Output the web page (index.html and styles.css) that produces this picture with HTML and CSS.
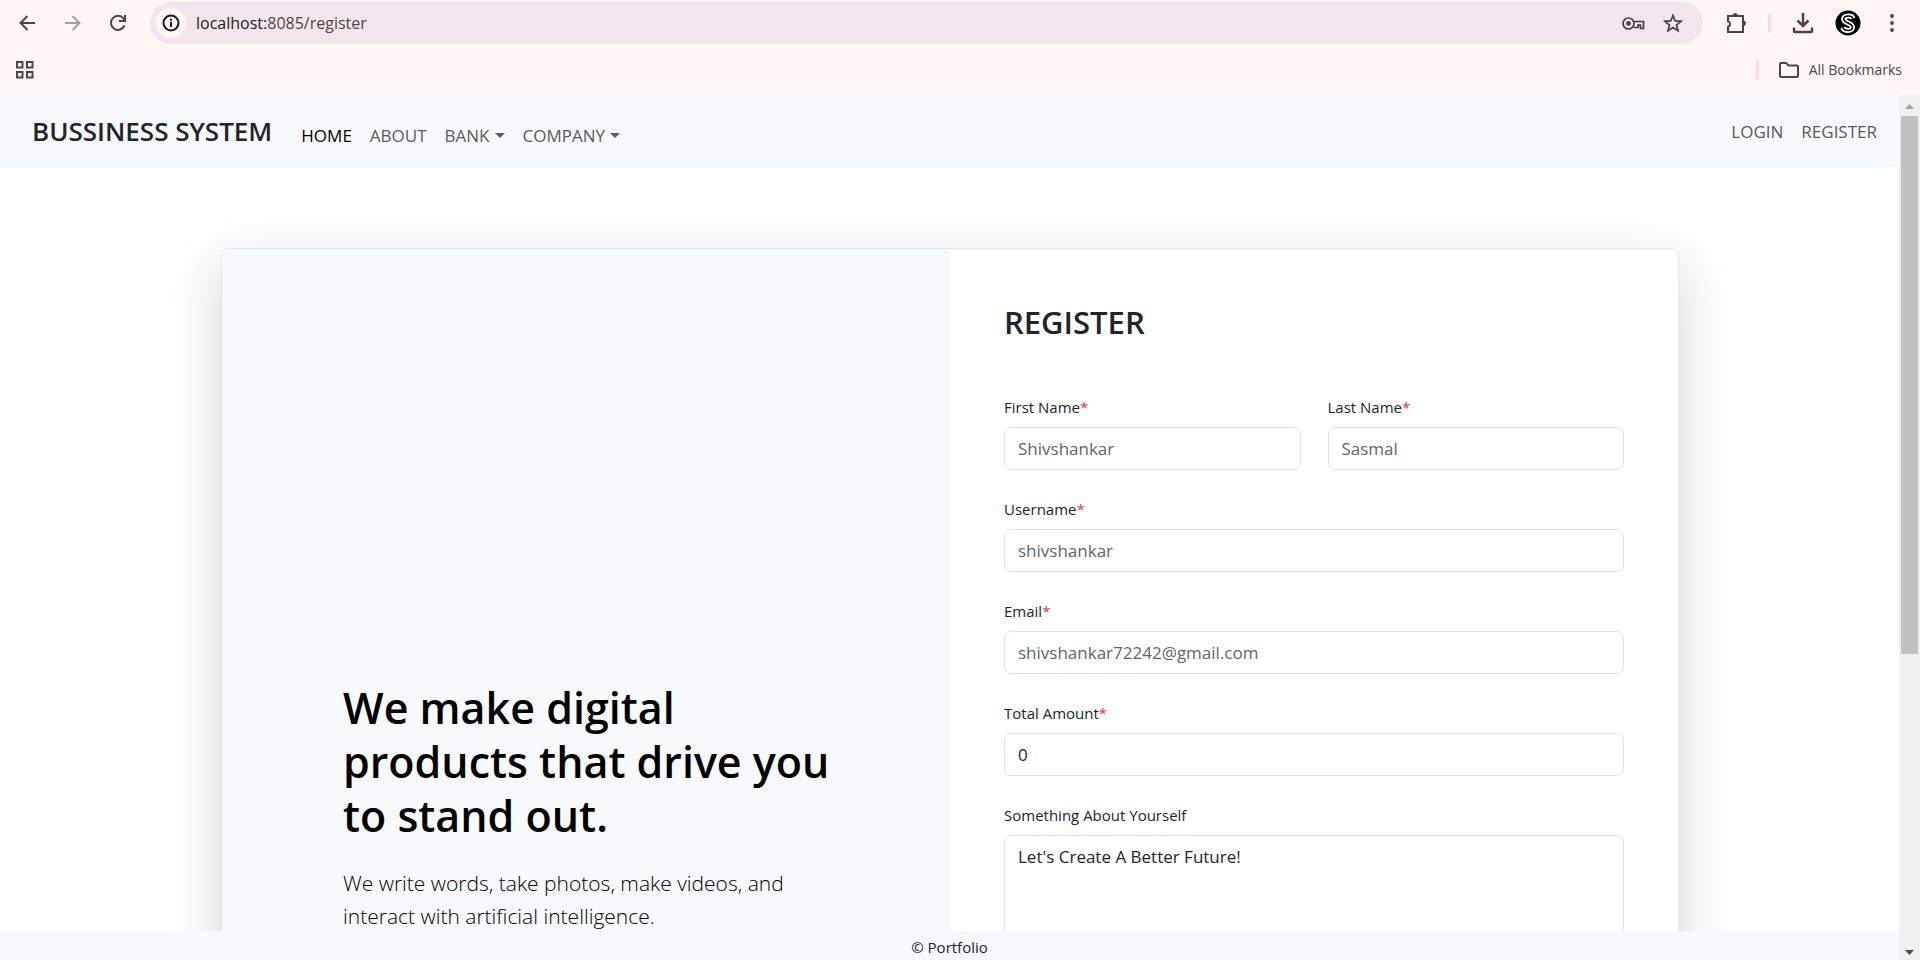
FILE: index.html
```html
<!DOCTYPE html>
<html lang="en">
<head>
<meta charset="utf-8">
<title>Register</title>
<link rel="stylesheet" href="styles.css">
</head>
<body>
<div class="browser">
  <div class="toolbar">
    <div class="nav-buttons">
      <button class="icon-btn" aria-label="Back"><svg width="20" height="20" viewBox="0 0 20 20"><path d="M17 10H3M9.500 3L2.500 10l7 7" /></svg></button>
      <button class="icon-btn faded" aria-label="Forward"><svg width="20" height="20" viewBox="0 0 20 20"><path d="M2 10h14M9.500 3l7 7-7 7"/></svg></button>
      <button class="icon-btn" aria-label="Reload"><svg width="20" height="20" viewBox="0 0 20 20"><path d="M16.500 12.500A7 7 0 1 1 15.500 5.500L17 7.500"/><path d="M17 2v6h-6"/></svg></button>
    </div>
    <div class="omnibox">
      <button class="site-info" aria-label="View site information"><svg width="18" height="18" viewBox="0 0 18 18"><circle cx="9" cy="9" r="7.500"/><path d="M9 8v5M9 4.800v2"/></svg></button>
      <span class="url">localhost:<span class="url-path">8085/register</span></span>
      <button class="icon-btn" aria-label="Passwords"><svg width="24" height="20" viewBox="0 0 24 20"><circle class="thin" cx="7.500" cy="10.500" r="5.500"/><circle cx="7.500" cy="10.500" r="1.400" fill="currentColor"/><path class="thin" d="M12.500 8.500h10v7h-3v-3.300h-2.500v2.300h-4.500"/></svg></button>
      <button class="icon-btn" aria-label="Bookmark this tab"><svg width="20" height="20" viewBox="0 0 20 20"><path class="thin" d="M10 2.500l2.200 5.400 5.800.4-4.500 3.700 1.500 5.700-5-3.100-5 3.100 1.500-5.700L2 8.300l5.800-.4z"/></svg></button>
    </div>
    <div class="actions">
      <button class="icon-btn" aria-label="Extensions"><svg width="22" height="22" viewBox="0 0 22 22"><path d="M3 4h5.500a1.800 1.800 0 0 1 3.400 0H18v5.500a2 2 0 0 1 0 3.600V20H3v-5.200a2.800 2.800 0 0 0 0-5.400z"/><path d="M8.500 4c0-2.500 3.400-2.500 3.400 0zM18 9.500c2.500 0 2.500 3.600 0 3.600z" fill="currentColor"/></svg></button>
      <span class="divider"></span>
      <button class="icon-btn" aria-label="Downloads"><svg width="22" height="22" viewBox="0 0 22 22"><path class="thick" d="M11 1v13M5.500 8.500l5.500 5.500 5.500-5.500M2 15.500v3.500q0 1 1 1h16q1 0 1-1v-3.500"/></svg></button>
      <button class="icon-btn" aria-label="Profile"><svg width="26" height="26" viewBox="0 0 26 26"><circle class="avatar-bg" cx="13" cy="13" r="12.500"/><path class="avatar-wide" d="M18 8.500C17 5 9 5 8.700 9c-.2 4 9 4 8.800 8.300-.3 4.500-8.500 4-9.500.2"/><path class="avatar-line" d="M18 8.500C17 5 9 5 8.700 9c-.2 4 9 4 8.800 8.300-.3 4.500-8.500 4-9.500.2"/></svg></button>
      <button class="icon-btn" aria-label="Menu"><svg width="20" height="20" viewBox="0 0 20 20"><g class="dots"><circle cx="10" cy="3" r="1.900"/><circle cx="10" cy="10" r="1.900"/><circle cx="10" cy="17" r="1.900"/></g></svg></button>
    </div>
  </div>
  <div class="bookmarks">
    <button class="icon-btn" aria-label="Apps"><svg width="20" height="20" viewBox="0 0 20 20"><path d="M2 2h5.500v5.500H2zM12 2h5.500v5.500H12zM2 12h5.500v5.500H2zM12 12h5.500v5.500H12z"/></svg></button>
    <div class="bookmarks-end">
      <span class="divider"></span>
      <button class="all-bookmarks"><svg width="22" height="18" viewBox="0 0 22 18"><path d="M2 3q0-1 1-1h5l2.500 2.500H19q1 0 1 1V15q0 1-1 1H3q-1 0-1-1z"/></svg>All Bookmarks</button>
    </div>
  </div>

  <div class="viewport">
    <div class="page">
      <nav class="navbar">
        <a class="brand" href="#">BUSSINESS SYSTEM</a>
        <div class="menu">
          <a class="nav-link active" href="#">HOME</a>
          <a class="nav-link" href="#">ABOUT</a>
          <a class="nav-link dropdown" href="#">BANK</a>
          <a class="nav-link dropdown" href="#">COMPANY</a>
        </div>
        <div class="account">
          <a class="nav-link" href="#">LOGIN</a>
          <a class="nav-link" href="#">REGISTER</a>
        </div>
      </nav>
      <main class="main">
        <section class="card">
          <div class="hero">
            <h2 class="hero-title">We make digital products that drive you to stand out.</h2>
            <p class="hero-text">We write words, take photos, make videos, and interact with artificial intelligence.</p>
          </div>
          <form class="form">
            <h1 class="form-title">REGISTER</h1>
            <div class="fields">
              <div class="field"><label for="first">First Name<span class="req">*</span></label><input id="first" class="control" type="text" placeholder="Shivshankar"></div>
              <div class="field"><label for="last">Last Name<span class="req">*</span></label><input id="last" class="control" type="text" placeholder="Sasmal"></div>
              <div class="field wide"><label for="user">Username<span class="req">*</span></label><input id="user" class="control" type="text" placeholder="shivshankar"></div>
              <div class="field wide"><label for="email">Email<span class="req">*</span></label><input id="email" class="control" type="email" placeholder="shivshankar72242@gmail.com"></div>
              <div class="field wide"><label for="amount">Total Amount<span class="req">*</span></label><input id="amount" class="control" type="text" value="0"></div>
              <div class="field wide"><label for="about">Something About Yourself</label><textarea id="about" class="control" rows="5">Let's Create A Better Future!</textarea></div>
            </div>
          </form>
        </section>
      </main>
      <footer class="footer">© Portfolio</footer>
    </div>
    <div class="scrollbar">
      <svg class="arrow up" width="9" height="5" viewBox="0 0 9 5"><path d="M0 5L4.500 0 9 5z"/></svg>
      <div class="track"><div class="thumb"></div></div>
      <svg class="arrow" width="9" height="5" viewBox="0 0 9 5"><path d="M0 0l4.500 5L9 0z"/></svg>
    </div>
  </div>
</div>
</body>
</html>
```
FILE: styles.css
```css
* { box-sizing: border-box; }
body {
  margin: 0;
  font-family: "Open Sans", "Noto Sans", sans-serif;
  font-size: 17px;
  line-height: 27px;
  color: #212529;
  background: #fff;
}
button { border: 0; padding: 0; background: none; font: inherit; color: inherit; }
a { color: inherit; text-decoration: none; }
svg { display: block; fill: none; stroke: currentColor; stroke-width: 2; }
.thin { stroke-width: 1.7; }
.thick { stroke-width: 2.5; }

.browser { display: flex; flex-direction: column; height: 100vh; overflow: hidden; background: #fff7f6; }
.toolbar { display: flex; align-items: center; height: 46px; padding: 0 18px; gap: 22px; color: #5a3d44; }
.icon-btn { flex: none; }
.faded { opacity: .5; }
.nav-buttons { display: flex; gap: 25px; }
.nav-buttons .icon-btn { width: 20px; }
.omnibox {
  flex: 1; display: flex; align-items: center; gap: 18px;
  height: 42px; padding: 0 20px 0 6px;
  border-radius: 21px; background: #f2e5eb; color: #4a4044;
}
.site-info {
  display: flex; align-items: center; justify-content: center;
  width: 30px; height: 30px; margin-right: -8px;
  border-radius: 50%; background: #fff7f6; color: #221a1c;
}
.url { flex: 1; font-size: 16px; color: #201a1b; }
.url-path { color: #524347; }
.actions { display: flex; align-items: center; gap: 21px; }
.divider { width: 3px; height: 20px; border-radius: 2px; background: #ffd9e0; }
.avatar-bg { fill: #000; stroke: none; }
.avatar-wide { stroke: #fff; stroke-width: 5; }
.avatar-line { stroke: #000; stroke-width: 1.5; }
.dots { fill: currentColor; stroke: none; }
.bookmarks {
  display: flex; align-items: center; justify-content: space-between;
  height: 49px; padding: 0 18px 2px 15px; color: #524347;
}
.bookmarks-end, .all-bookmarks { display: flex; align-items: center; }
.bookmarks-end { gap: 19px; }
.all-bookmarks { gap: 9px; font-size: 14px; }

.viewport { flex: 1; display: flex; min-height: 0; background: #fff; }
.page { flex: 1; display: flex; flex-direction: column; min-width: 0; }
.navbar {
  display: flex; align-items: center; flex: none;
  height: 72px; padding: 0 13px 0 32px; background: #f8f9fb;
}
.brand { font-size: 26px; font-weight: 600; line-height: 36px; margin-right: 20px; }
.menu { display: flex; flex: 1; padding-top: 8px; }
.account { display: flex; }
.nav-link { padding: 0 9px; color: #5a5b5d; }
.active { color: #000; }
.dropdown::after {
  content: ""; display: inline-block; margin-left: 5px; vertical-align: 4px;
  border: 5px solid transparent; border-top-color: currentColor; border-bottom: 0;
}

.main { flex: 1; min-height: 0; overflow: hidden; padding: 81px 220px 0 221px; }
.card {
  display: grid; grid-template-columns: 1fr 1fr;
  border: 1px solid #e3e8ec; border-radius: 7px; background: #fff;
  box-shadow: 0 18px 54px rgba(0, 0, 0, .175);
}
.hero { padding: 432px 108px 0 121px; background: #f8f9fb; border-radius: 6px 0 0 6px; }
.hero-title { margin: 0 0 24px; font-size: 43px; font-weight: 600; line-height: 54px; color: #000; }
.hero-text { max-width: 470px; margin: 0; font-size: 21px; font-weight: 300; line-height: 33px; color: #000; }
.form { padding: 54px 54px 120px; }
.form-title { margin: 0 0 54px; font-size: 31px; font-weight: 600; line-height: 38px; }
.fields { display: grid; grid-template-columns: 1fr 1fr; gap: 27px; }
.wide { grid-column: 1 / -1; }
.field { display: flex; flex-direction: column; gap: 8px; }
.field label { font-size: 15px; line-height: 24px; }
.req { color: #dc3545; }
.control {
  width: 100%; padding: 7px 13px; border: 1px solid #dee2e6; border-radius: 7px;
  background: #fff; font: inherit; line-height: 27px; color: #212529; resize: none;
}
input.control { height: 43px; }
.control::placeholder { color: #5f656b; opacity: 1; }
.footer { flex: none; height: 29px; padding-top: 4px; background: #f8f9fb; text-align: center; font-size: 15px; line-height: 24px; }

.scrollbar {
  display: flex; flex-direction: column; align-items: center; gap: 7px;
  width: 21px; padding: 9px 0 5px; background: #f0f0f0;
}
.arrow { flex: none; fill: #505050; stroke: none; }
.up { fill: #a3a3a3; }
.track { flex: 1; width: 17px; }
.thumb { height: 65%; background: #c1c1c1; }
```
